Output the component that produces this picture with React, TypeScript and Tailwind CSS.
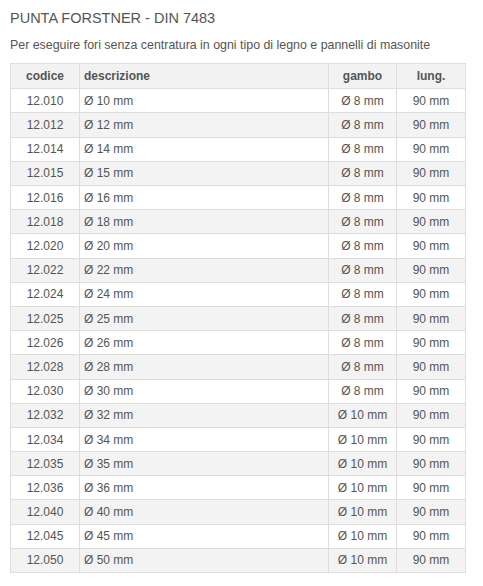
const rows = [
  ['12.010', 'Ø 10 mm', 'Ø 8 mm'],
  ['12.012', 'Ø 12 mm', 'Ø 8 mm'],
  ['12.014', 'Ø 14 mm', 'Ø 8 mm'],
  ['12.015', 'Ø 15 mm', 'Ø 8 mm'],
  ['12.016', 'Ø 16 mm', 'Ø 8 mm'],
  ['12.018', 'Ø 18 mm', 'Ø 8 mm'],
  ['12.020', 'Ø 20 mm', 'Ø 8 mm'],
  ['12.022', 'Ø 22 mm', 'Ø 8 mm'],
  ['12.024', 'Ø 24 mm', 'Ø 8 mm'],
  ['12.025', 'Ø 25 mm', 'Ø 8 mm'],
  ['12.026', 'Ø 26 mm', 'Ø 8 mm'],
  ['12.028', 'Ø 28 mm', 'Ø 8 mm'],
  ['12.030', 'Ø 30 mm', 'Ø 8 mm'],
  ['12.032', 'Ø 32 mm', 'Ø 10 mm'],
  ['12.034', 'Ø 34 mm', 'Ø 10 mm'],
  ['12.035', 'Ø 35 mm', 'Ø 10 mm'],
  ['12.036', 'Ø 36 mm', 'Ø 10 mm'],
  ['12.040', 'Ø 40 mm', 'Ø 10 mm'],
  ['12.045', 'Ø 45 mm', 'Ø 10 mm'],
  ['12.050', 'Ø 50 mm', 'Ø 10 mm'],
]

export default function App() {
  return (
    <div className="bg-white min-h-[586px] px-[10px] pt-[8px] text-[#555] font-['Liberation_Sans',Arial,sans-serif]">
      <h1 className="text-[14.5px] leading-[20px]">PUNTA FORSTNER - DIN 7483</h1>
      <p className="mt-[7.6px] text-[12.4px] leading-[18px]">
        Per eseguire fori senza centratura in ogni tipo di legno e pannelli di masonite
      </p>
      <table className="mt-[9.7px] w-[455px] table-fixed border-collapse text-[12px]">
        <colgroup>
          <col className="w-[69px]" />
          <col className="w-[249px]" />
          <col className="w-[68px]" />
          <col className="w-[69px]" />
        </colgroup>
        <thead>
          <tr className="bg-[#f2f2f2] h-[25px]">
            <th className="border border-[#ddd] font-bold text-center p-0">codice</th>
            <th className="border border-[#ddd] font-bold text-left pl-[4px] p-0">descrizione</th>
            <th className="border border-[#ddd] font-bold text-center p-0">gambo</th>
            <th className="border border-[#ddd] font-bold text-center p-0">lung.</th>
          </tr>
        </thead>
        <tbody>
          {rows.map((r, i) => (
            <tr key={r[0]} className={`h-[24.2px] ${i % 2 === 1 ? 'bg-[#f3f3f3]' : 'bg-white'}`}>
              <td className="border border-[#ddd] text-center p-0">{r[0]}</td>
              <td className="border border-[#ddd] pl-[4px] p-0">{r[1]}</td>
              <td className="border border-[#ddd] text-center p-0">{r[2]}</td>
              <td className="border border-[#ddd] text-center p-0">90 mm</td>
            </tr>
          ))}
        </tbody>
      </table>
    </div>
  )
}
